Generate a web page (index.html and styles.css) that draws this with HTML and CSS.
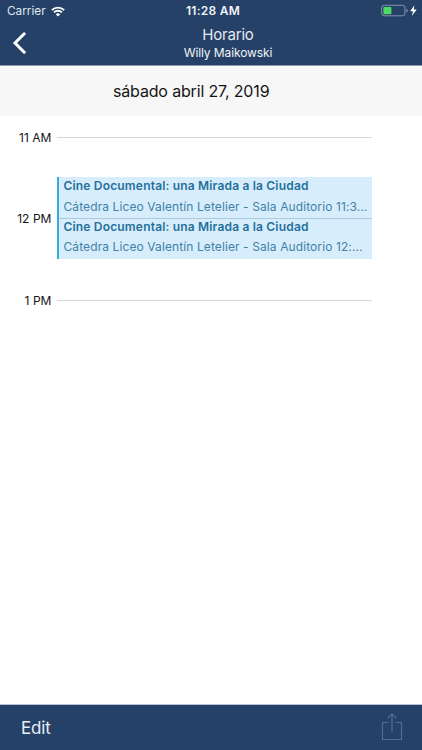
FILE: index.html
```html
<!DOCTYPE html>
<html lang="es">
<head>
<meta charset="utf-8">
<title>Horario</title>
<link rel="stylesheet" href="styles.css">
</head>
<body>
<header class="top">
  <div class="status">
    <div class="network"><span class="carrier">Carrier</span>
      <svg class="wifi" width="14" height="11" viewBox="0 0 14 11"><path d="M.8 4.1A9 9 0 0 1 13.2 4.1M3 6.4a5.8 5.8 0 0 1 8 0" fill="none" stroke="#fff" stroke-width="1.9"/><path d="M4.7 8.2a3.4 3.4 0 0 1 4.6 0L7 10.6z" fill="#fff"/></svg>
    </div>
    <span class="clock">11:28 AM</span>
    <svg class="battery" width="38" height="14" viewBox="0 0 38 14"><rect x=".7" y="1.3" width="23.3" height="10.5" rx="2.5" fill="none" stroke="#8495ae"/><rect x="2.4" y="2.9" width="8" height="7.3" rx=".8" fill="#4cd964"/><path d="M25.4 4.7v3.8q1.4-.6 1.4-1.9T25.4 4.7z" fill="#8495ae"/><path d="M33.4 1.2 29.1 7.3H32l-1.2 4.8 4.9-6.6h-3z" fill="#fff"/></svg>
  </div>
  <nav class="nav">
    <svg class="back" width="14" height="22" viewBox="0 0 14 22"><path d="M12.2 1.8 3 11l9.2 9.2" fill="none" stroke="#fff" stroke-width="3" stroke-linecap="round"/></svg>
    <div class="heading"><h1>Horario</h1><p>Willy Maikowski</p></div>
  </nav>
</header>
<div class="date"><span>sábado abril 27, 2019</span></div>
<main class="day">
  <div class="hour"><span>11 AM</span><i></i></div>
  <div class="hour booked"><span>12 PM</span>
    <div class="events">
      <article><h2>Cine Documental: una Mirada a la Ciudad</h2><p>Cátedra Liceo Valentín Letelier - Sala Auditorio 11:3...</p></article>
      <article><h2>Cine Documental: una Mirada a la Ciudad</h2><p>Cátedra Liceo Valentín Letelier - Sala Auditorio 12:...</p></article>
    </div>
  </div>
  <div class="hour"><span>1 PM</span><i></i></div>
</main>
<footer class="toolbar">
  <span class="edit">Edit</span>
  <svg class="share" width="22" height="30" viewBox="0 0 22 30"><path d="M7.5 10.5h-6v17h19v-17h-6M11 19.5V2M6.8 6.2 11 2l4.2 4.2" fill="none" stroke="#536b90" stroke-width="1.2"/></svg>
</footer>
</body>
</html>
```
FILE: styles.css
```css
* { box-sizing: border-box; margin: 0; padding: 0; }
body { width: 422px; height: 750px; display: flex; flex-direction: column; background: #fff; color: #151515; font-family: Inter, "Liberation Sans", sans-serif; overflow: hidden; white-space: nowrap; }
svg { display: block; flex: none; }
.top { height: 66px; background: #254167; color: #f1f4f8; border-bottom: 1px solid #8e9bae; }
.status { height: 22px; display: grid; grid-template-columns: 179px 1fr auto; align-items: center; padding: 0 3px 0 7px; }
.network { display: flex; align-items: center; gap: 5px; }
.carrier { font-size: 11.8px; color: #dfe6ee; }
.clock { font-size: 12px; line-height: 14px; padding-bottom: 1px; font-weight: 600; letter-spacing: .25px; }
.nav { display: grid; grid-template-columns: 80px 1fr 80px; height: 43px; }
.back { margin: 10px 0 0 12px; }
.heading { text-align: center; padding-left: 34px; }
h1 { font-size: 15px; line-height: 22px; font-weight: 400; letter-spacing: -.2px; color: #e4eaf1; padding-top: 2px; }
.heading p { font-size: 12px; line-height: 13px; letter-spacing: -.1px; }
.date { height: 50px; background: #f7f7f7; padding-left: 113px; font-size: 16px; line-height: 50px; letter-spacing: -.16px; }
.day { flex: 1; padding-top: 11px; }
.hour { height: 20px; display: grid; grid-template-columns: 52px 315px; column-gap: 5px; align-items: center; font-size: 12px; }
.hour > span { text-align: right; letter-spacing: .05px; padding-right: .5px; }
.hour i { height: 1px; background: #d5d5d5; }
.booked { height: 82px; margin: 30px 0 31px; }
.events { border-left: 2px solid #37abe0; background: #d7edfb; color: #24709b; }
article { height: 41px; padding-left: 4.5px; }
article + article { border-top: 1px solid #abcbdc; }
h2 { font-size: 12px; line-height: 17px; font-weight: 600; letter-spacing: .18px; }
article p { font-size: 12px; line-height: 25px; letter-spacing: .1px; color: #3f82a8; }
article + article h2 { line-height: 15px; }
.toolbar { height: 46px; background: #254167; border-top: 1px solid #b4c4d2; display: flex; justify-content: space-between; padding: 0 19px 0 21px; color: #e8eef5; }
.edit { font-size: 17px; line-height: 46px; letter-spacing: -.2px; }
.share { margin-top: 7px; }
```
